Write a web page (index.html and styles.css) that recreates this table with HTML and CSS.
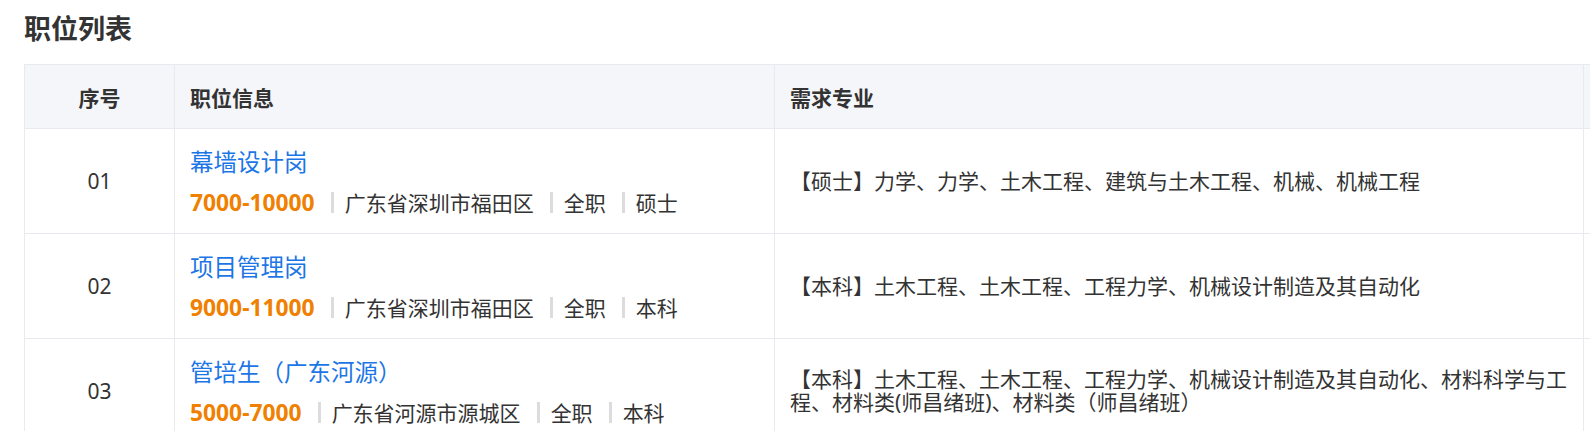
FILE: index.html
```html
<!DOCTYPE html>
<html lang="zh-CN">
<head>
<meta charset="utf-8">
<title>职位列表</title>
<link rel="stylesheet" href="styles.css">
</head>
<body>
<div class="page">
  <h2 class="title">职位列表</h2>
  <div class="table-wrap">
    <table class="jobs">
      <colgroup>
        <col class="c-no">
        <col class="c-info">
        <col class="c-major">
        <col class="c-extra">
      </colgroup>
      <thead>
        <tr>
          <th class="no">序号</th>
          <th>职位信息</th>
          <th>需求专业</th>
          <th></th>
        </tr>
      </thead>
      <tbody>
        <tr>
          <td class="no">01</td>
          <td>
            <div class="job-name">幕墙设计岗</div>
            <div class="job-meta"><span class="salary">7000-10000</span><span class="sep"></span><span>广东省深圳市福田区</span><span class="sep"></span><span>全职</span><span class="sep"></span><span>硕士</span></div>
          </td>
          <td class="major">【硕士】力学、力学、土木工程、建筑与土木工程、机械、机械工程</td>
          <td></td>
        </tr>
        <tr>
          <td class="no">02</td>
          <td>
            <div class="job-name">项目管理岗</div>
            <div class="job-meta"><span class="salary">9000-11000</span><span class="sep"></span><span>广东省深圳市福田区</span><span class="sep"></span><span>全职</span><span class="sep"></span><span>本科</span></div>
          </td>
          <td class="major">【本科】土木工程、土木工程、工程力学、机械设计制造及其自动化</td>
          <td></td>
        </tr>
        <tr>
          <td class="no">03</td>
          <td>
            <div class="job-name">管培生（广东河源）</div>
            <div class="job-meta"><span class="salary">5000-7000</span><span class="sep"></span><span>广东省河源市源城区</span><span class="sep"></span><span>全职</span><span class="sep"></span><span>本科</span></div>
          </td>
          <td class="major">【本科】土木工程、土木工程、工程力学、机械设计制造及其自动化、材料科学与工程、材料类(师昌绪班)、材料类（师昌绪班）</td>
          <td></td>
        </tr>
      </tbody>
    </table>
  </div>
</div>
</body>
</html>
```

FILE: styles.css
```css
html {
  overflow: hidden;
}
body {
  margin: 0;
  background: #ffffff;
  font-family: "Noto Sans", "Noto Sans CJK SC", sans-serif;
  color: #333333;
}
.page {
  padding-left: 24px;
}
.title {
  margin: 10px 0 17px;
  font-size: 27px;
  line-height: 37px;
  font-weight: 700;
  color: #333333;
}
.table-wrap {
  overflow: hidden;
}
.jobs {
  border-collapse: collapse;
  table-layout: fixed;
  width: 1800px;
  font-size: 21px;
}
.c-no { width: 150px; }
.c-info { width: 600px; }
.c-major { width: 809px; }
.c-extra { width: 241px; }
.jobs th,
.jobs td {
  border: 1px solid #e8eaf0;
  padding: 0 15px;
  text-align: left;
  vertical-align: middle;
}
.jobs th {
  height: 63px;
  background: #f5f6fa;
  font-weight: 700;
  color: #333333;
}
.jobs td {
  height: 104px;
  color: #333333;
}
.jobs .no {
  text-align: center;
}
.job-name {
  font-size: 23.5px;
  line-height: 34px;
  color: #1c76e6;
}
.job-meta {
  display: flex;
  align-items: center;
  margin-top: 9px;
  line-height: 30px;
  color: #333333;
}
.salary {
  font-family: "Noto Sans", sans-serif;
  font-size: 22.8px;
  font-weight: 700;
  color: #f08000;
}
.sep {
  display: inline-block;
  width: 3px;
  height: 21px;
  background: #dcdcdc;
  margin: 0 11px 0 16px;
}
.major {
  line-height: 23px;
}
```
